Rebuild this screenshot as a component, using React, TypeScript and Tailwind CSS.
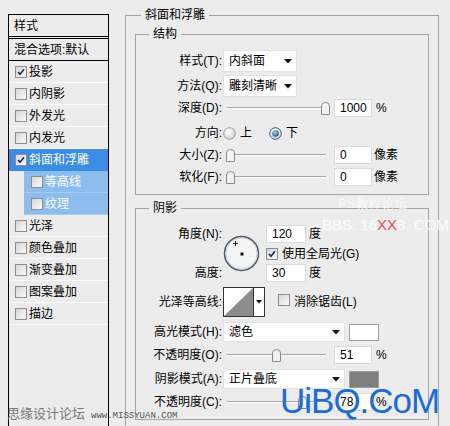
import React from "react";

type Item = { name: string; checked?: boolean; selected?: boolean; sub?: boolean };

const items: Item[] = [
  { name: "投影", checked: true },
  { name: "内阴影" },
  { name: "外发光" },
  { name: "内发光" },
  { name: "斜面和浮雕", checked: true, selected: true },
  { name: "等高线", sub: true },
  { name: "纹理", sub: true },
  { name: "光泽" },
  { name: "颜色叠加" },
  { name: "渐变叠加" },
  { name: "图案叠加" },
  { name: "描边" },
];

function CheckBox({ checked = false }: { checked?: boolean }) {
  return (
    <span className="inline-flex w-[12px] h-[12px] shrink-0 items-center justify-center border border-[#8c8d8d] bg-linear-to-br from-[#d6d6d6] to-[#fafafa]">
      {checked && (
        <svg width="8" height="8" viewBox="0 0 8 8">
          <path d="M1 4 L3 6.3 L7 1.2" stroke="#1d2d58" strokeWidth="1.6" fill="none" />
        </svg>
      )}
    </span>
  );
}

function Radio({ checked = false }: { checked?: boolean }) {
  return (
    <svg width="13" height="13" viewBox="0 0 13 13" className="shrink-0">
      <defs>
        <radialGradient id="rg" cx="0.4" cy="0.35" r="0.7">
          <stop offset="0" stopColor="#ffffff" />
          <stop offset="1" stopColor="#d0d0d0" />
        </radialGradient>
        <radialGradient id="rd" cx="0.4" cy="0.35" r="0.7">
          <stop offset="0" stopColor="#9fd3ea" />
          <stop offset="1" stopColor="#1c4f70" />
        </radialGradient>
      </defs>
      <circle cx="6.5" cy="6.5" r="5.8" fill="url(#rg)" stroke={checked ? "#345e80" : "#9a9a9a"} />
      {checked && <circle cx="6.5" cy="6.5" r="3.3" fill="url(#rd)" />}
    </svg>
  );
}

function Thumb({ left }: { left: number }) {
  return (
    <svg width="9" height="13" viewBox="0 0 9 13" className="absolute top-[3px]" style={{ left }}>
      <path d="M0.5 12.5 V4 Q0.5 0.5 4.5 0.5 Q8.5 0.5 8.5 4 V12.5 Z" fill="#f2f2f2" stroke="#8a8a8a" />
    </svg>
  );
}

function Slider({ pos }: { pos: number }) {
  return (
    <div className="relative w-[104px] h-[18px] shrink-0 ml-[4px]">
      <div className="absolute left-[1px] right-[4px] top-[8px] h-[2px] border-t border-[#a4a4a4] border-b border-b-white" />
      <Thumb left={pos} />
    </div>
  );
}

function NumBox({ value, w = "w-[38px]" }: { value: string; w?: string }) {
  return (
    <div className={`${w} h-[18px] shrink-0 bg-white border border-[#dadada] pl-[5px] flex items-center`}>
      {value}
    </div>
  );
}

function Arrow() {
  return (
    <svg width="8" height="5" viewBox="0 0 8 5" className="shrink-0">
      <path d="M0 0 H8 L4 4.5 Z" fill="#111" />
    </svg>
  );
}

function Select({ value, w, h = "h-[22px]" }: { value: string; w: string; h?: string }) {
  return (
    <div className={`${w} ${h} shrink-0 bg-white border border-[#e2e2e2] flex items-center justify-between pl-[5px] pr-[4px]`}>
      <span>{value}</span>
      <Arrow />
    </div>
  );
}

function Label({ text, w = "w-[86px]" }: { text: string; w?: string }) {
  return <div className={`${w} shrink-0 text-right`}>{text}</div>;
}

function LeftPanel() {
  return (
    <div className="ml-[8px] mt-[14px] w-[101px] h-[420px] shrink-0 border-x border-t border-black">
      <div className="h-[22px] flex items-center pl-[5px] border-b border-black">样式</div>
      <div className="h-[23px] flex items-center pl-[5px] border-t border-black border-b mt-[1px]">混合选项:默认</div>
      {items.map((it) => (
        <div
          key={it.name}
          className={`h-[22px] flex items-center border-b ${
            it.sub
              ? "ml-[15px] pl-[7px] bg-[#8dbcef] border-[#a9ccf3] text-white"
              : it.selected
              ? "pl-[6px] bg-[#3a8ce4] border-[#3a8ce4] text-white"
              : "pl-[6px] border-[#fbfbfb]"
          }`}
        >
          <CheckBox checked={it.checked} />
          <span className="ml-[2px]">{it.name}</span>
        </div>
      ))}
    </div>
  );
}

function AngleDial() {
  return (
    <svg width="37" height="37" viewBox="0 0 37 37" className="shrink-0 mt-[11px] ml-[1px]">
      <circle cx="18.5" cy="18.5" r="17" fill="#f5f5f5" stroke="#4b5866" strokeWidth="1.5" />
      <circle cx="18.5" cy="18.5" r="15.6" fill="none" stroke="#c9cdd1" strokeWidth="1" />
      <rect x="17.5" y="17.5" width="3" height="3" fill="#111" />
      <path d="M12.5 6 V11 M10 8.5 H15" stroke="#222" strokeWidth="1" />
    </svg>
  );
}

function ContourBox() {
  return (
    <div className="w-[42px] h-[30px] shrink-0 border border-[#333] bg-white flex ml-[1px]">
      <svg width="29" height="28" viewBox="0 0 29 28" className="shrink-0">
        <path d="M0 28 L29 0 V28 Z" fill="#8c8c8c" />
      </svg>
      <div className="flex-1 border-l border-[#333] flex items-center justify-center">
        <svg width="6" height="4" viewBox="0 0 6 4">
          <path d="M0 0 H6 L3 3.5 Z" fill="#111" />
        </svg>
      </div>
    </div>
  );
}

export default function App() {
  return (
    <div className="w-[450px] h-[426px] bg-[#ececec] relative overflow-hidden flex text-[12px] leading-[16px] text-black font-['Liberation_Sans','Noto_Sans_CJK_SC',sans-serif]">
      <LeftPanel />

      <fieldset className="ml-[16px] mt-[7px] w-[314px] h-[440px] shrink-0 border border-[#a3a3a3] p-0">
        <legend className="ml-[15px] px-[4px] h-[16px]">斜面和浮雕</legend>

        <fieldset className="ml-[9px] mt-[3px] w-[294px] border border-[#a3a3a3] p-0 pb-[8px]">
          <legend className="ml-[13px] px-[4px] h-[16px]">结构</legend>
          <div className="flex items-center mt-[8px] h-[22px]">
            <Label text="样式(T):" />
            <div className="ml-[1px]"><Select value="内斜面" w="w-[74px]" /></div>
          </div>
          <div className="flex items-center mt-[3px] h-[22px]">
            <Label text="方法(Q):" />
            <div className="ml-[1px]"><Select value="雕刻清晰" w="w-[74px]" /></div>
          </div>
          <div className="flex items-center mt-[2px] h-[18px]">
            <Label text="深度(D):" />
            <Slider pos={95} />
            <div className="ml-[4px]"><NumBox value="1000" /></div>
            <span className="ml-[4px]">%</span>
          </div>
          <div className="flex items-center mt-[7px] h-[18px]">
            <Label text="方向:" />
            <div className="ml-[1px] flex items-center">
              <Radio />
              <span className="ml-[4px]">上</span>
              <div className="ml-[17px]"><Radio checked /></div>
              <span className="ml-[4px]">下</span>
            </div>
          </div>
          <div className="flex items-center mt-[4px] h-[18px]">
            <Label text="大小(Z):" />
            <Slider pos={0} />
            <div className="ml-[4px]"><NumBox value="0" /></div>
            <span className="ml-[2px]">像素</span>
          </div>
          <div className="flex items-center mt-[4px] h-[18px]">
            <Label text="软化(F):" />
            <Slider pos={0} />
            <div className="ml-[4px]"><NumBox value="0" /></div>
            <span className="ml-[2px]">像素</span>
          </div>
        </fieldset>

        <fieldset className="ml-[9px] mt-[5px] w-[294px] border border-[#a3a3a3] p-0 pb-[8px]">
          <legend className="ml-[13px] px-[4px] h-[16px]">阴影</legend>
          <div className="flex mt-[8px] h-[58px]">
            <div className="w-[86px] shrink-0 flex flex-col justify-between text-right">
              <div className="h-[18px] leading-[18px] mt-[1px]">角度(N):</div>
              <div className="h-[18px] leading-[18px]">高度:</div>
            </div>
            <AngleDial />
            <div className="ml-[6px] flex flex-col">
              <div className="flex items-center mt-[1px]">
                <NumBox value="120" w="w-[40px]" />
                <span className="ml-[3px]">度</span>
              </div>
              <div className="flex items-center mt-[3px] h-[16px]">
                <CheckBox checked />
                <span className="ml-[4px]">使用全局光(G)</span>
              </div>
              <div className="flex items-center mt-[2px]">
                <NumBox value="30" w="w-[40px]" />
                <span className="ml-[3px]">度</span>
              </div>
            </div>
          </div>
          <div className="flex items-center mt-[5px] h-[30px]">
            <Label text="光泽等高线:" />
            <ContourBox />
            <div className="ml-[13px]"><CheckBox /></div>
            <span className="ml-[4px]">消除锯齿(L)</span>
          </div>
          <div className="flex items-center mt-[5px] h-[20px]">
            <Label text="高光模式(H):" />
            <div className="ml-[1px]"><Select value="滤色" w="w-[122px]" h="h-[20px]" /></div>
            <div className="ml-[4px] w-[30px] h-[17px] bg-white border border-[#9d9d9d]" />
          </div>
          <div className="flex items-center mt-[4px] h-[18px]">
            <Label text="不透明度(O):" />
            <Slider pos={46} />
            <div className="ml-[4px]"><NumBox value="51" /></div>
            <span className="ml-[4px]">%</span>
          </div>
          <div className="flex items-center mt-[5px] h-[20px]">
            <Label text="阴影模式(A):" />
            <div className="ml-[1px]"><Select value="正片叠底" w="w-[122px]" h="h-[20px]" /></div>
            <div className="ml-[4px] w-[30px] h-[17px] bg-[#7e7e7e] border border-[#9d9d9d]" />
          </div>
          <div className="flex items-center mt-[4px] h-[18px]">
            <Label text="不透明度(C):" />
            <Slider pos={72} />
            <div className="ml-[4px]"><NumBox value="78" /></div>
            <span className="ml-[4px]">%</span>
          </div>
        </fieldset>
      </fieldset>

      {/* watermarks */}
      <div className="absolute left-[338px] top-[196px] whitespace-nowrap text-[13px] text-white/70">PS教程论坛</div>
      <div className="absolute left-[322px] top-[216px] whitespace-nowrap text-[15px] leading-[18px] text-white/80 font-['Liberation_Sans',sans-serif]">
        BBS. 16<span className="text-[#e44c4c]">XX</span>8. COM
      </div>
      <div className="absolute left-[7px] top-[406px] whitespace-nowrap flex items-end text-[#7a7a7a]">
        <span className="text-[13px] leading-[16px]">思缘设计论坛</span>
        <span className="ml-[6px] text-[9px] leading-[12px] text-[#555] font-['Liberation_Mono',monospace]">www.MISSYUAN.COM</span>
      </div>
      <div className="absolute left-[280px] top-[381px] whitespace-nowrap text-[35px] leading-[40px] tracking-[-1px] text-[#1c6dd3] font-['Liberation_Sans',sans-serif]">
        UiBQ.CoM
      </div>
    </div>
  );
}
